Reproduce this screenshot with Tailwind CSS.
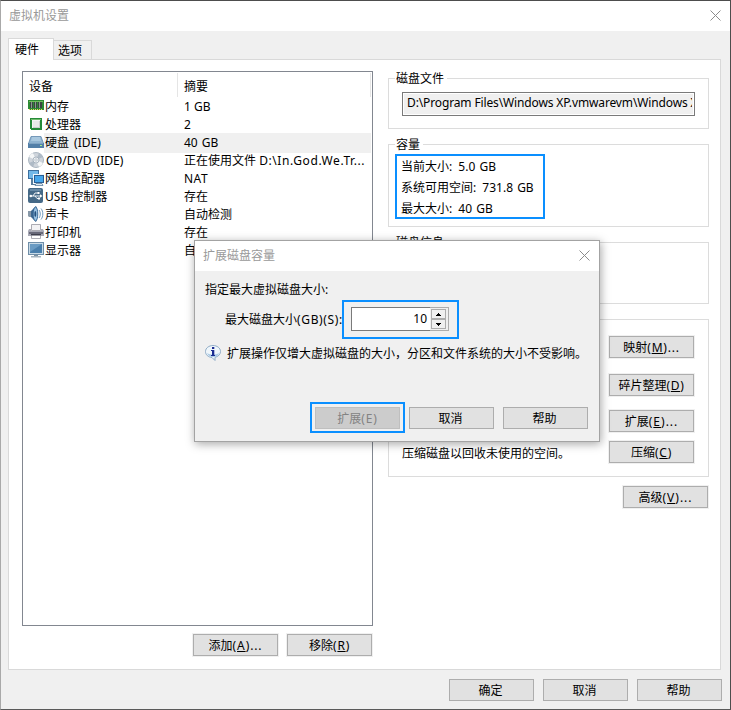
<!DOCTYPE html>
<html lang="zh-CN">
<head>
<meta charset="utf-8">
<title>虚拟机设置</title>
<script src="https://cdn.jsdelivr.net/npm/@tailwindcss/browser@4"></script>
</head>
<body class="bg-white font-['Noto_Sans','Noto_Sans_CJK_SC',sans-serif] text-[12px] leading-[18px] text-black whitespace-nowrap">
<div class="relative flex h-[710px] w-[731px] flex-col overflow-hidden bg-[#f0f0f0] border border-l-[#a9a9a9] border-t-[#4d4d4d] border-r-[#4d4d4d] border-b-[#5a5a5a]">
  <!-- lighter left part of the window edge -->
  <div class="absolute -left-px -top-px h-px w-[139px] bg-[#a9a9a9]"></div>
  <div class="absolute -left-px -bottom-px h-px w-[141px] bg-[#a9a9a9]"></div>

  <header class="flex h-[30px] shrink-0 items-center justify-between bg-white pl-2 pr-[9px] text-[#999]">
    <span>虚拟机设置</span>
    <svg class="mb-[1px] size-[11px]" viewBox="0 0 11 11" fill="none" stroke="#8c8c8c"><path d="M.5.5l10 10M10.5.5l-10 10"/></svg>
  </header>

  <nav class="relative z-10 mt-[7px] ml-[7px] flex h-[21px] shrink-0 items-end">
    <div class="-mb-px h-[22px] w-[46px] border border-b-0 border-[#d9d9d9] bg-white pl-[6px] pt-px leading-[20px]">硬件</div>
    <div class="h-[19px] w-[38px] border border-b-0 border-l-0 border-[#d9d9d9] pl-1 leading-[20px]">选项</div>
  </nav>

  <main class="ml-[7px] flex h-[611px] w-[713px] shrink-0 border border-[#d9d9d9] bg-white">
    <section class="ml-[13px] mt-[11px] w-[351px]">
      <div class="h-[555px] border border-[#828790] pt-px">
        <div class="grid h-6 grid-cols-[155px_193px] grid-rows-[24px] leading-[27px]">
          <div class="border-r border-[#e5e5e5] pl-[6px]">设备</div>
          <div class="border-r border-[#e5e5e5] pl-[6px]">摘要</div>
        </div>
        <ul class="leading-[20px]">
          <li class="grid h-[18px] grid-cols-[21px_140px_1fr] pr-px"><span class="pl-[5px] pt-px"><svg class="h-4 w-4" viewBox="0 0 16 16"><path fill="#2d8a34" d="M0 2h16v10H1v-1H0z"/><path fill="#73bd5f" d="M1 3h14v1H1z"/><path fill="#3b4542" d="M2 4h3v6H2zm4 0h3v6H6zm4 0h4v6h-4z"/><path stroke="#a9bfae" stroke-width=".7" d="M3.500 4v6m4-6v6m4-6v6"/><path stroke="#e8d45c" stroke-dasharray="1 1" d="M1 11.500h14"/></svg></span><span class="pl-[1px]">内存</span><span>1 GB</span></li>
          <li class="grid h-[18px] grid-cols-[21px_140px_1fr] pr-px"><span class="pl-[5px] pt-px"><svg class="h-4 w-4" viewBox="0 0 16 16"><path fill="#258a38" d="M2 2h12v12H3v-1H2z"/><path fill="#70bc6d" d="M3 3h10v1H3z"/><path fill="#f4f4f2" d="M4 4h8v8H4z"/><path fill="#c9cdca" d="M5 5h7v7H5z"/><path fill="#e8e9e7" d="M5 5h6v6H5z"/></svg></span><span class="pl-[1px]">处理器</span><span>2</span></li>
          <li class="grid h-[18px] grid-cols-[21px_140px_1fr] pr-px"><span class="pl-[5px] pt-px"><svg class="h-4 w-4" viewBox="0 0 16 16"><path fill="#8fb3d0" stroke="#5f89ad" stroke-width=".8" d="M3 2.500h10l2.500 7H.5z"/><path fill="#a9c8df" d="M4 3h8l1 4H3z"/><path fill="#527fa8" d="M0 9h16v5H0z"/><path fill="#7ea3c3" d="M1 9h14v1H1z"/><path fill="#a6ef8a" d="M12 11h2v1h-2z"/></svg></span><span class="bg-[#f0f0f0] pl-[1px] [word-spacing:2px]">硬盘 (IDE)</span><span class="bg-[#f0f0f0] [word-spacing:1px]">40 GB</span></li>
          <li class="grid h-[18px] grid-cols-[21px_140px_1fr] pr-px"><span class="pl-[5px] pt-px"><svg class="h-4 w-4" viewBox="0 0 16 16"><circle cx="8" cy="8" r="7.500" fill="#cfd5dc" stroke="#9ba8b5" stroke-width=".8"/><path fill="#f5f7f8" d="M8 8L1 5a7 7 0 0 1 4-4zM8 8l7 3a7 7 0 0 1-4 4z"/><path fill="#aebac6" d="M8 8l3-7a7 7 0 0 1 4 4zM8 8l-3 7a7 7 0 0 1-4-4z"/><circle cx="8" cy="8" r="3" fill="#eef1f3" stroke="#94a2b0" stroke-width=".7"/><circle cx="8" cy="8" r="1.200" fill="#fff" stroke="#94a2b0" stroke-width=".6"/></svg></span><span class="pl-[2px] [word-spacing:2px]">CD/DVD (IDE)</span><span>正在使用文件 <span class="tracking-[.6px]">D:\In.God.We.Tr...</span></span></li>
          <li class="grid h-[18px] grid-cols-[21px_140px_1fr] pr-px"><span class="pl-[5px] pt-px"><svg class="h-4 w-4" viewBox="0 0 16 16"><path fill="#3c6f9f" d="M0 0h11v9H0z"/><path fill="#73b8e8" d="M1 1h9v7H1z"/><path fill="#587c9c" d="M3 9h2v5h3v1H3z"/><path fill="#eef5fa" d="M5 4h11v9H5z"/><path fill="#285e94" d="M6 5h10v8H6z"/><path fill="#47a6ea" d="M7 6h8v6H7z"/><path fill="#dfe8ef" stroke="#4b7194" stroke-width=".7" d="M8 13.500h6l1 2H7z"/></svg></span><span class="pl-[1px]">网络适配器</span><span class="tracking-[.5px]">NAT</span></li>
          <li class="grid h-[18px] grid-cols-[21px_140px_1fr] pr-px"><span class="pl-[5px] pt-px"><svg class="h-4 w-4" viewBox="0 0 16 16"><rect width="15" height="15" x="0" rx="2" fill="#456987"/><path fill="#688aa6" d="M2 1h11v2H2z"/><g fill="none" stroke="#fff" stroke-width=".9"><path d="M2 8h11M5 8l2-3h3M7 8l2 2.500h2"/></g><circle cx="2.800" cy="8" r="1.300" fill="#fff"/><path fill="#fff" d="M12 6.300L14.500 8 12 9.700zM9.500 4h2v2h-2zM10 9.500h2v2h-2z"/></svg></span><span class="pl-[1px]">USB 控制器</span><span>存在</span></li>
          <li class="grid h-[18px] grid-cols-[21px_140px_1fr] pr-px"><span class="pl-[5px] pt-px"><svg class="h-4 w-4" viewBox="0 0 16 16"><path fill="#8798a8" d="M0 5h3v6H1L0 10z"/><path fill="#3c6790" d="M3 5l5-5c2 3 2 12 0 16l-5-5z"/><ellipse cx="7.500" cy="8" rx="2.300" ry="7" fill="#9cc4e3" stroke="#285b8c" stroke-width=".8"/><ellipse cx="7.300" cy="8" rx="1" ry="3" fill="#234f7c"/><path fill="none" stroke="#6f9bc0" stroke-width="1" d="M11 4c1.700 2 1.700 6 0 8M13 2.500c2.400 3 2.400 8 0 11"/></svg></span><span class="pl-[1px]">声卡</span><span>自动检测</span></li>
          <li class="grid h-[18px] grid-cols-[21px_140px_1fr] pr-px"><span class="pl-[5px] pt-px"><svg class="h-4 w-4" viewBox="0 0 16 16"><path fill="#f2f2f4" stroke="#9797a1" stroke-width=".8" d="M3.500.5h9v6h-9z"/><path fill="#a7a8b5" d="M1 5h2v2h10V5h2l1 2v5H0V7z"/><path fill="#686979" d="M1 8h14v2H1z"/><path fill="#3f404e" d="M3 10h10v2H3z"/><path fill="#fff" stroke="#9a9aa5" stroke-width=".8" d="M3.500 11.500h9v3h-9z"/></svg></span><span class="pl-[1px]">打印机</span><span>存在</span></li>
          <li class="grid h-[18px] grid-cols-[21px_140px_1fr] pr-px"><span class="pl-[5px] pt-px"><svg class="h-4 w-4" viewBox="0 0 16 16"><path fill="#6f8ea8" d="M0 0h16v13H0z"/><path fill="#c9dae6" d="M1 1h14v11H1z"/><path fill="#4a7fac" d="M2 2h12v9H2z"/><path fill="#6a9bc3" d="M2 2h12L2 10z"/><path fill="#7d91a1" d="M6 13h4v1H6z"/><path fill="#a4b3bf" d="M3 14h10v1.500H3z"/></svg></span><span class="pl-[1px]">显示器</span><span>自动检测</span></li>
        </ul>
      </div>
      <div class="mt-2 flex justify-end gap-[9px] pr-px text-center leading-[22px]">
        <div class="h-[22px] w-[85px] border border-[#adadad] bg-[#e1e1e1] ring-1 ring-[#f0f0f0]">添加<span class="tracking-[.9px]">(<u>A</u>)...</span></div>
        <div class="h-[22px] w-[85px] border border-[#adadad] bg-[#e1e1e1] ring-1 ring-[#f0f0f0]">移除<span class="tracking-[.8px]">(<u>R</u>)</span></div>
      </div>
    </section>

    <section class="ml-[15px] mt-[18px] w-[321px]">
      <fieldset class="relative h-[51px] border border-[#dcdcdc] pl-[13px] pt-[13px]">
        <div class="absolute -top-[9px] left-[6px] bg-white pl-px pr-[3px]">磁盘文件</div>
        <div class="h-6 w-[293px] border border-[#7a7a7a] bg-white p-px"><div class="h-5 bg-[#f0f0f0] pl-[3px] pr-px"><div class="h-5 overflow-hidden leading-[18px] tracking-[-.13px]">D:\Program Files\Windows XP.vmwarevm\Windows XP</div></div></div>
      </fieldset>
      <fieldset class="relative mt-[15px] h-[83px] border border-[#dcdcdc]">
        <div class="absolute -top-[9px] left-[6px] h-[18px] bg-white pl-px pr-[3px]">容量</div>
        <div class="relative ml-[6px] mt-[9px] h-[65px] w-[150px] border-2 border-[#0a8fff] pl-[4px] leading-[21px] [word-spacing:3px]">
          <div>当前大小: <span class="[word-spacing:1px]">5.0 GB</span></div><div>系统可用空间: <span class="[word-spacing:1px]">731.8 GB</span></div><div>最大大小: <span class="[word-spacing:1px]">40 GB</span></div>
        </div>
      </fieldset>
      <fieldset class="relative mt-[15px] h-[62px] border border-[#dcdcdc]">
        <div class="absolute -top-[9px] left-[6px] bg-white pl-px pr-[3px]">磁盘信息</div>
      </fieldset>
      <fieldset class="mt-[15px] flex h-[158px] justify-between border border-[#dcdcdc] pl-[13px] pr-[14px]">
        <div class="pt-[125px]">压缩磁盘以回收未使用的空间。</div>
        <div class="pt-4 text-center leading-[22px]">
          <div class="h-[22px] w-[85px] border border-[#adadad] bg-[#e1e1e1] ring-1 ring-[#f0f0f0]">映射<span class="tracking-[.8px]">(<u>M</u>)...</span></div>
          <div class="mt-4 h-[22px] w-[85px] border border-[#adadad] bg-[#e1e1e1] ring-1 ring-[#f0f0f0]">碎片整理<span class="tracking-[.6px]">(<u>D</u>)</span></div>
          <div class="mt-[14px] h-[22px] w-[85px] border border-[#adadad] bg-[#e1e1e1] ring-1 ring-[#f0f0f0]">扩展<span class="tracking-[1px]">(<u>E</u>)...</span></div>
          <div class="mt-[9px] h-[22px] w-[85px] border border-[#adadad] bg-[#e1e1e1] ring-1 ring-[#f0f0f0]">压缩<span class="tracking-[.8px]">(<u>C</u>)</span></div>
        </div>
      </fieldset>
      <div class="ml-auto mr-px mt-[9px] h-[22px] w-[85px] border border-[#adadad] bg-[#e1e1e1] text-center leading-[22px] ring-1 ring-[#f0f0f0]">高级<span class="tracking-[1px]">(<u>V</u>)...</span></div>
    </section>
  </main>

  <footer class="mt-[9px] flex justify-end gap-[9px] pr-2 text-center leading-[22px]">
    <div class="h-[22px] w-[85px] border border-[#adadad] bg-[#e1e1e1] pr-[2px]">确定</div>
    <div class="h-[22px] w-[85px] border border-[#adadad] bg-[#e1e1e1] pr-[2px]">取消</div>
    <div class="h-[22px] w-[85px] border border-[#adadad] bg-[#e1e1e1] pr-[2px]">帮助</div>
  </footer>

  <!-- modal dialog over the settings window -->
  <div class="absolute left-[193px] top-[239px] z-20 h-[202px] w-[406px] border border-[#a3a3a3] bg-[#f0f0f0] shadow-[1px_2px_9px_rgba(0,0,0,0.35)]">
    <div class="flex h-[30px] items-center justify-between bg-white pl-2 pr-[9px] text-[#999]">
      <span>扩展磁盘容量</span>
      <svg class="mb-[2px] size-[11px]" viewBox="0 0 11 11" fill="none" stroke="#8c8c8c"><path d="M.5.5l10 10M10.5.5l-10 10"/></svg>
    </div>
    <div class="pl-[10px] pt-[10px]">指定最大虚拟磁盘大小:</div>
    <div class="flex pl-[30px] pt-px">
      <span class="w-[117px] pt-[11px]">最大磁盘大小<span class="tracking-[.65px]">(GB)(S):</span></span>
      <div class="relative z-10 flex h-[39px] w-[117px] border-2 border-[#0a8fff] bg-[#f0f0f0] pl-[7px] pt-[5px]">
        <div class="h-6 w-[79px] border border-r-0 border-[#7a7a7a] bg-white pr-[3px] text-right leading-[21px]">10</div>
        <div class="flex h-6 w-[19px] flex-col border border-l-0 border-[#adadad] bg-[#f0f0f0] p-px">
          <div class="flex h-[10px] w-[15px] items-center justify-center border border-[#adadad]"><svg class="h-[3px] w-[5px]" viewBox="0 0 5 3"><path d="M2 0h1v1h1v1h1v1H0V2h1V1h1z"/></svg></div>
          <div class="flex h-[10px] w-[15px] items-center justify-center border border-[#adadad]"><svg class="h-[3px] w-[5px]" viewBox="0 0 5 3"><path d="M0 0h5v1H4v1H3v1H2V2H1V1H0z"/></svg></div>
        </div>
      </div>
    </div>
    <div class="mt-[2px] flex h-[24px] items-center pl-[10px]">
      <svg class="mr-[6px] h-4 w-4" viewBox="0 0 16 16"><path fill="#eff6fb" stroke="#8fabc5" d="M8 .5c4 0 7.500 2.500 7.500 6 0 2.900-2.400 5.200-5.500 5.800V15.500L7 12.500C3.200 12.200.5 9.800.5 6.500.5 3 4 .5 8 .5z"/><path fill="#a9cae6" d="M2 8c1 3 4 4 6 4 3 0 5-1 6-4-3 2-9 2-12 0z"/><path fill="#1c2d92" d="M7 2h2.300v2H7zM6 5h3.300v5H10v1H6v-1h1V6H6z"/></svg>
      <span class="pt-px">扩展操作仅增大虚拟磁盘的大小，分区和文件系统的大小不受影响。</span>
    </div>
    <div class="mt-[37px] flex pl-[115px] text-center leading-[22px]">
      <div class="h-[31px] w-[95px] border-2 border-[#0a8fff] p-[3px]"><div class="h-[22px] w-[85px] border border-[#bfbfbf] bg-[#ccc] text-[#838383]">扩展<span class="tracking-[.8px]">(E)</span></div></div>
      <div class="ml-[4px] mt-[5px] h-[22px] w-[85px] border border-[#adadad] bg-[#e1e1e1] pr-[2px]">取消</div>
      <div class="ml-[9px] mt-[5px] h-[22px] w-[85px] border border-[#adadad] bg-[#e1e1e1] pr-[2px]">帮助</div>
    </div>
  </div>
</div>
</body>
</html>
